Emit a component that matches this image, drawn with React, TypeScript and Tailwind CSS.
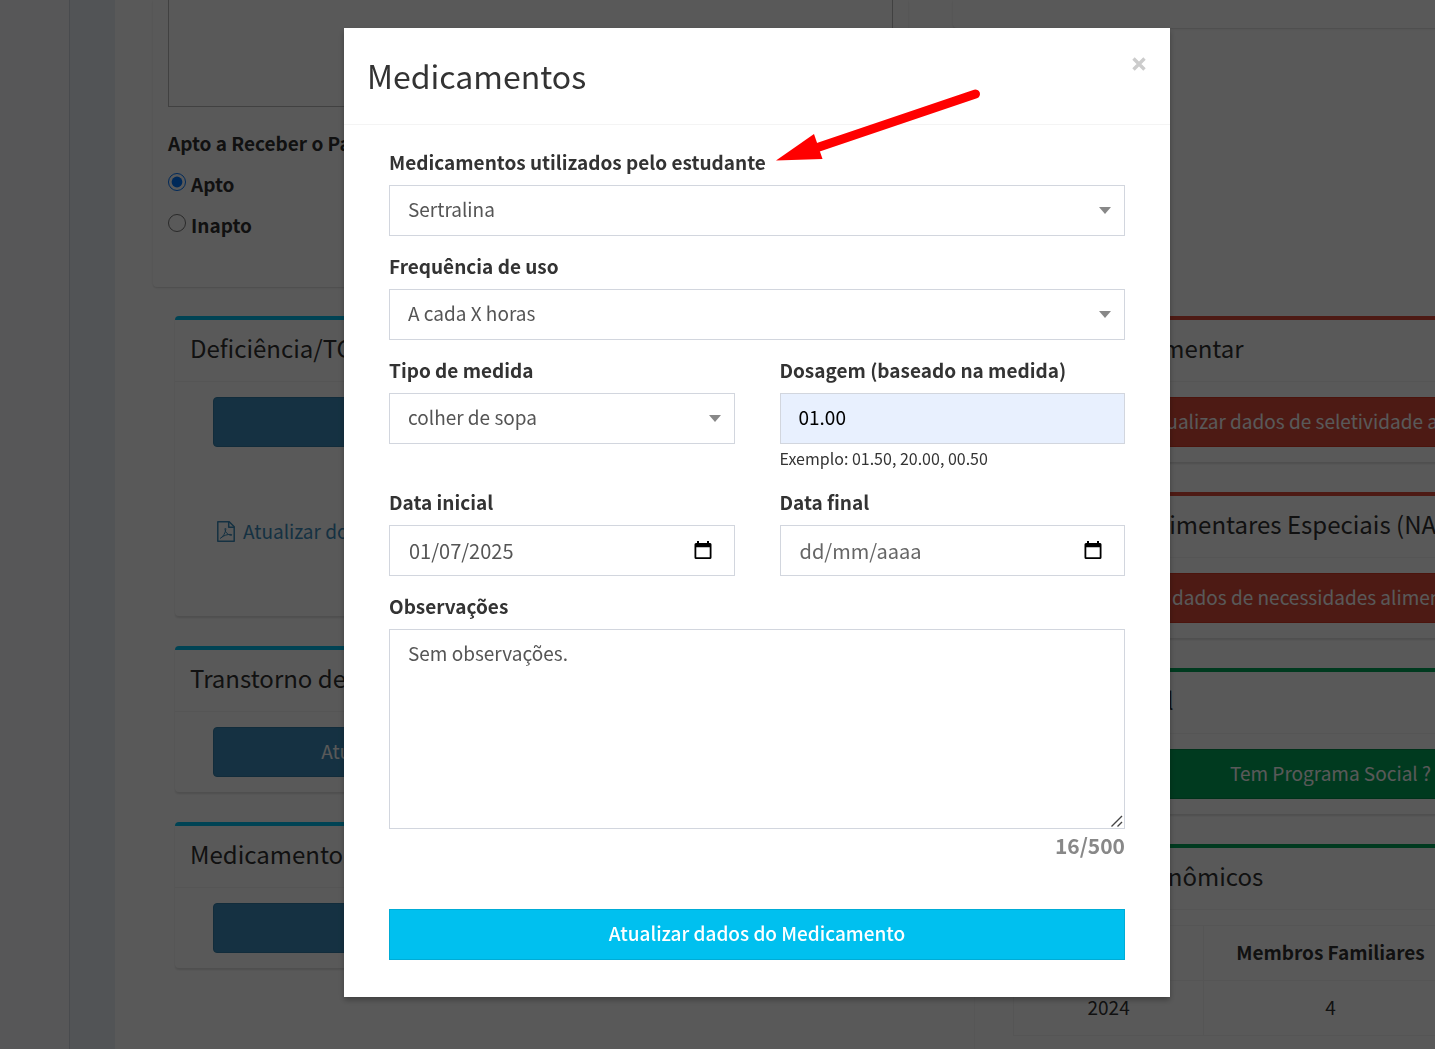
import { useState } from "react";
import type { ReactNode } from "react";

const TONES = {
  info: "border-t-[#00c0ef]",
  danger: "border-t-[#dd4b39]",
  success: "border-t-[#00a65a]",
};

const BUTTONS = {
  info: "bg-[#3c8dbc] border-[#367fa9]",
  danger: "bg-[#dd4b39] border-[#d73925]",
  success: "bg-[#00a65a] border-[#008d4c]",
};

type Tone = keyof typeof TONES;

function Box({ tone, title, children }: { tone: Tone; title: string; children: ReactNode }) {
  return (
    <section className={`rounded border-t-4 bg-white shadow-[0_2px_2px_rgba(0,0,0,0.12)] ${TONES[tone]}`}>
      <h3 className="h-[62px] border-b border-[#f4f4f4] px-[15px] text-[24px] leading-[56px] whitespace-nowrap">{title}</h3>
      <div className="px-[38px] py-[15px]">{children}</div>
    </section>
  );
}

function BoxButton({ tone, children }: { tone: Tone; children: ReactNode }) {
  return (
    <button type="button" className={`block h-[50px] w-full rounded border pb-0.5 text-[19px] leading-7 whitespace-nowrap text-white ${BUTTONS[tone]}`}>
      {children}
    </button>
  );
}

function PdfIcon() {
  return (
    <svg viewBox="0 0 18 21" className="h-[21px] w-[18px]" fill="none" stroke="currentColor" strokeWidth="1.5" strokeLinejoin="round">
      <path d="M.8.8h11.4l5 5v14.4H.8z" />
      <path d="M11.7.8v5.5h5.5" />
      <path d="M3.4 17.3c2.6-1.4 5-5.4 5.4-8.900.1-1.600-.9-1.600-.8 0 .3 3 2.600 5.400 6.200 6 1 0 .9-1-.2-1-3.400-.2-7.400.9-10.600 3.900z" strokeWidth="1" />
    </svg>
  );
}

function CalendarIcon() {
  return (
    <svg viewBox="0 0 18 20" className="h-5 w-[18px]" fill="currentColor">
      <path fillRule="evenodd" d="M3 1h2v2h8V1h2v2h1.200Q17.500 3 17.500 4.500v13q0 1.500-1.500 1.500H2Q.5 19 .5 17.500v-13Q.5 3 2 3h1zM2.300 7.200v10h13.400v-10z" />
    </svg>
  );
}

const CONTROL = "h-[51px] w-full border border-[#d2d6de] bg-white leading-7 text-[#555]";

function Field({ id, label, children }: { id: string; label: string; children: ReactNode }) {
  return (
    <div>
      <label htmlFor={id} className="mb-2 block text-[19px] leading-[30px] font-bold">{label}</label>
      {children}
    </div>
  );
}

function SelectBox({ id, options }: { id: string; options: string[] }) {
  return (
    <div className="relative">
      <select id={id} className={`${CONTROL} appearance-none px-[18px] pb-1 text-[19px]`}>
        {options.map((o) => <option key={o}>{o}</option>)}
      </select>
      <span className="pointer-events-none absolute top-[22px] right-[14px] border-x-[6px] border-t-[7px] border-x-transparent border-t-[#888]" />
    </div>
  );
}

function DateBox({ id, initial }: { id: string; initial: string }) {
  const [value, setValue] = useState(initial);
  return (
    <div className="relative">
      <input id={id} type="text" placeholder="dd/mm/aaaa" value={value} onChange={(e) => setValue(e.target.value)} className={`${CONTROL} px-[19px] text-[20px] placeholder:text-[#666]`} />
      <button type="button" aria-label="Abrir calendário" className="absolute top-[15px] right-[23px] text-black"><CalendarIcon /></button>
    </div>
  );
}

function StudentPage() {
  return (
    <div className="flex h-screen overflow-hidden bg-white text-[#333]">
      <aside className="w-[70px] shrink-0 border-r border-[#d2d6de] bg-[#f9fafc]" />
      <div className="w-[45px] shrink-0 bg-[#ecf0f5]" />
      <main className="min-w-[1593px] flex-1 pl-[38px]">
        <div className="grid grid-cols-2 items-start gap-x-[45px]">
          <div className="mb-[29px] h-[287px] rounded-b px-[15px] shadow-[0_1px_2px_rgba(0,0,0,0.15)]">
            <textarea aria-label="Parecer" className="block h-[107px] w-full resize-none border border-t-0 border-[#bbb]" />
            <fieldset className="pt-[21px] text-[19px] leading-[30px] font-bold">
              <legend className="float-left mb-[11px] w-full">Apto a Receber o Passe Estudantil</legend>
              <label className="clear-both mb-[11px] flex gap-[5px]">
                <input type="radio" name="apto" defaultChecked className="mt-1 h-[18px] w-[18px]" />Apto
              </label>
              <label className="flex gap-[5px]">
                <input type="radio" name="apto" className="mt-1 h-[18px] w-[18px]" />Inapto
              </label>
            </fieldset>
          </div>
          <div className="h-7 rounded-b shadow-[0_1px_2px_rgba(0,0,0,0.15)]" />
        </div>
        <div className="grid grid-cols-2 items-start gap-x-[45px]">
          <div className="flex flex-col gap-[30px] px-[22px]">
            <Box tone="info" title="Deficiência/TGD">
              <BoxButton tone="info">Atualizar dados</BoxButton>
              <a href="#laudo" className="mt-[69px] mb-[55px] flex items-center gap-2 pl-1 text-[19px] leading-[30px] text-[#3c8dbc]">
                <PdfIcon />Atualizar documento
              </a>
            </Box>
            <Box tone="info" title="Transtorno de Aprendizagem">
              <BoxButton tone="info">Atualizar dados de transtorno de aprendizagem</BoxButton>
            </Box>
            <Box tone="info" title="Medicamentos">
              <BoxButton tone="info">Medicamentos</BoxButton>
            </Box>
          </div>
          <div className="flex flex-col gap-[30px] px-[22px]">
            <Box tone="danger" title="Seletividade Alimentar">
              <BoxButton tone="danger">Atualizar dados de seletividade alimentar</BoxButton>
            </Box>
            <Box tone="danger" title="Necessidades Alimentares Especiais (NAE)">
              <BoxButton tone="danger">Atualizar dados de necessidades alimentares especiais</BoxButton>
            </Box>
            <Box tone="success" title="Programa Social">
              <BoxButton tone="success">Tem Programa Social ?</BoxButton>
            </Box>
            <Box tone="success" title="Dados Socioeconômicos">
              <table className="w-full table-fixed border-collapse text-center text-[19px] leading-7">
                <thead>
                  <tr className="h-[55px]">
                    <th className="w-[30%] border border-[#f4f4f4] pb-0.5">Ano Letivo</th>
                    <th className="w-[40%] border border-[#f4f4f4] pb-0.5">Membros Familiares</th>
                    <th className="border border-[#f4f4f4]">Renda</th>
                  </tr>
                </thead>
                <tbody>
                  <tr className="h-[55px]">
                    <td className="border border-[#f4f4f4] pb-0.5">2024</td>
                    <td className="border border-[#f4f4f4] pb-0.5">4</td>
                    <td className="border border-[#f4f4f4]" />
                  </tr>
                </tbody>
              </table>
            </Box>
          </div>
        </div>
      </main>
    </div>
  );
}

function MedicationModal() {
  const [dose, setDose] = useState("01.00");
  const [notes, setNotes] = useState("Sem observações.");

  return (
    <div role="dialog" aria-modal="true" aria-labelledby="modal-title" className="relative mx-auto w-full max-w-[826px] bg-white text-[#333] shadow-[0_3px_6px_rgba(0,0,0,0.3)]">
      <header className="flex h-[97px] items-start justify-between border-b border-[#f4f4f4] px-[23px]">
        <h2 id="modal-title" className="pt-[23px] text-[32px] leading-[48px]">Medicamentos</h2>
        <button type="button" aria-label="Fechar" className="mt-[29px] text-[#ccc]">
          <svg viewBox="0 0 16 14" className="h-[14px] w-4" stroke="currentColor" strokeWidth="3.400"><path d="M2.500 1.500l11 11m0-11l-11 11" /></svg>
        </button>
      </header>
      <form className="flex flex-col gap-[15px] px-[45px] pt-[22px] pb-[37px]" onSubmit={(e) => e.preventDefault()}>
        <Field id="medicamento" label="Medicamentos utilizados pelo estudante">
          <SelectBox id="medicamento" options={["Sertralina"]} />
        </Field>
        <Field id="frequencia" label="Frequência de uso">
          <SelectBox id="frequencia" options={["A cada X horas"]} />
        </Field>
        <div className="grid grid-cols-2 gap-[45px]">
          <Field id="medida" label="Tipo de medida">
            <SelectBox id="medida" options={["colher de sopa"]} />
          </Field>
          <Field id="dosagem" label="Dosagem (baseado na medida)">
            <input id="dosagem" value={dose} onChange={(e) => setDose(e.target.value)} className="h-[51px] w-full border border-[#d2d6de] bg-[#e8f0fe] px-[18px] pb-1 text-[19px] leading-7 text-black" />
            <small className="block text-[16px] leading-7">Exemplo: 01.50, 20.00, 00.50</small>
          </Field>
        </div>
        <div className="grid grid-cols-2 gap-[45px]">
          <Field id="inicio" label="Data inicial"><DateBox id="inicio" initial="01/07/2025" /></Field>
          <Field id="fim" label="Data final"><DateBox id="fim" initial="" /></Field>
        </div>
        <Field id="observacoes" label="Observações">
          <div className="relative">
            <textarea
              id="observacoes"
              maxLength={500}
              value={notes}
              onChange={(e) => setNotes(e.target.value)}
              className="block h-[200px] w-full resize-none border border-[#d2d6de] px-[18px] py-2 text-[19px] leading-[30px] text-[#555]"
            />
            <svg viewBox="0 0 12 12" className="pointer-events-none absolute right-0.5 bottom-0.5 h-3 w-3" stroke="#444" strokeWidth="1.400">
              <path d="M.5 11.500l10.500-10.500M6.500 11.500l4.500-4.500" />
            </svg>
          </div>
          <div className="pb-0.5 text-right text-[21px] leading-8 font-bold text-[#888]">{notes.length}/500</div>
        </Field>
        <button type="submit" className="mt-[31px] h-[51px] border border-[#00acd6] bg-[#00c0ef] pb-[3px] text-[19px] leading-7 font-medium text-white">
          Atualizar dados do Medicamento
        </button>
      </form>
      {/* pointer to the first field */}
      <svg viewBox="0 0 206 74" className="pointer-events-none absolute top-[60px] left-[432px] w-[206px]" fill="#f00">
        <path d="M43 59L199.500 6" stroke="#f00" strokeWidth="9" strokeLinecap="round" />
        <path d="M0 72.500L38 46l8.500 25z" />
      </svg>
    </div>
  );
}

export default function App() {
  return (
    <div className="font-['Noto_Sans_CJK_JP','Noto_Sans',sans-serif]">
      <StudentPage />
      <div className="fixed inset-0 overflow-y-auto bg-black/65 py-7 pl-[79px]">
        <MedicationModal />
      </div>
    </div>
  );
}
